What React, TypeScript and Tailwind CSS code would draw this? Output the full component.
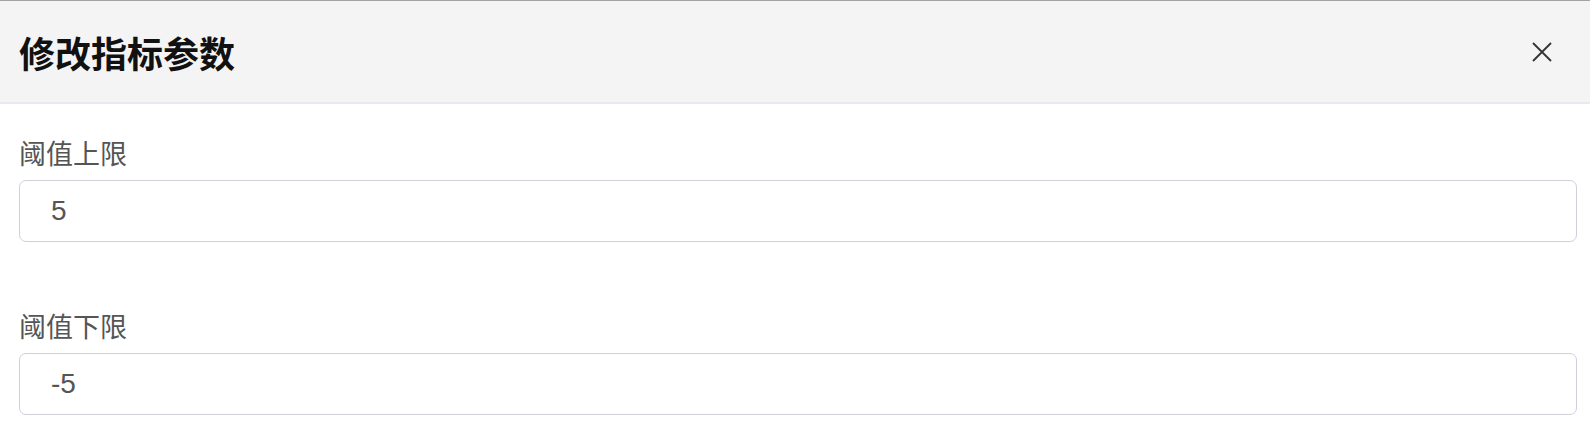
import React from 'react';

const cjk = "font-['Noto_Sans_CJK_SC',sans-serif]";

function Field({ label, value }: { label: string; value: string }) {
  return (
    <div className="flex flex-col">
      <label className={`${cjk} text-[27px] leading-[36px] text-[#555555] mb-[9px]`}>{label}</label>
      <input
        type="text"
        defaultValue={value}
        className="h-[62px] w-full rounded-[7px] border-[1.5px] border-[#cfd0db] bg-white pl-[31px] pr-4 font-['Liberation_Sans',Arial,sans-serif] text-[28px] text-[#555555] outline-none"
      />
    </div>
  );
}

export default function App() {
  return (
    <div className="w-[1590px] h-[424px] overflow-hidden bg-white">
      {/* Header */}
      <div className="h-[104px] border-t border-t-[#a3a3a3] border-b-2 border-b-[#e6e9f4] bg-[#f4f4f4] flex items-center justify-between pl-[19px] pr-[38px]">
        <h2 className={`${cjk} text-[36px] font-bold text-[#111111]`}>修改指标参数</h2>
        <button className="w-5 h-5 text-[#333333]" aria-label="关闭">
          <svg viewBox="0 0 20 20" width="20" height="20" fill="none" stroke="currentColor" strokeWidth="1.8">
            <path d="M1 1l18 18M19 1L1 19" />
          </svg>
        </button>
      </div>

      {/* Body */}
      <div className="flex flex-col gap-[66px] pt-[31px] pl-[19px] pr-[13px]">
        <Field label="阈值上限" value="5" />
        <Field label="阈值下限" value="-5" />
      </div>
    </div>
  );
}
